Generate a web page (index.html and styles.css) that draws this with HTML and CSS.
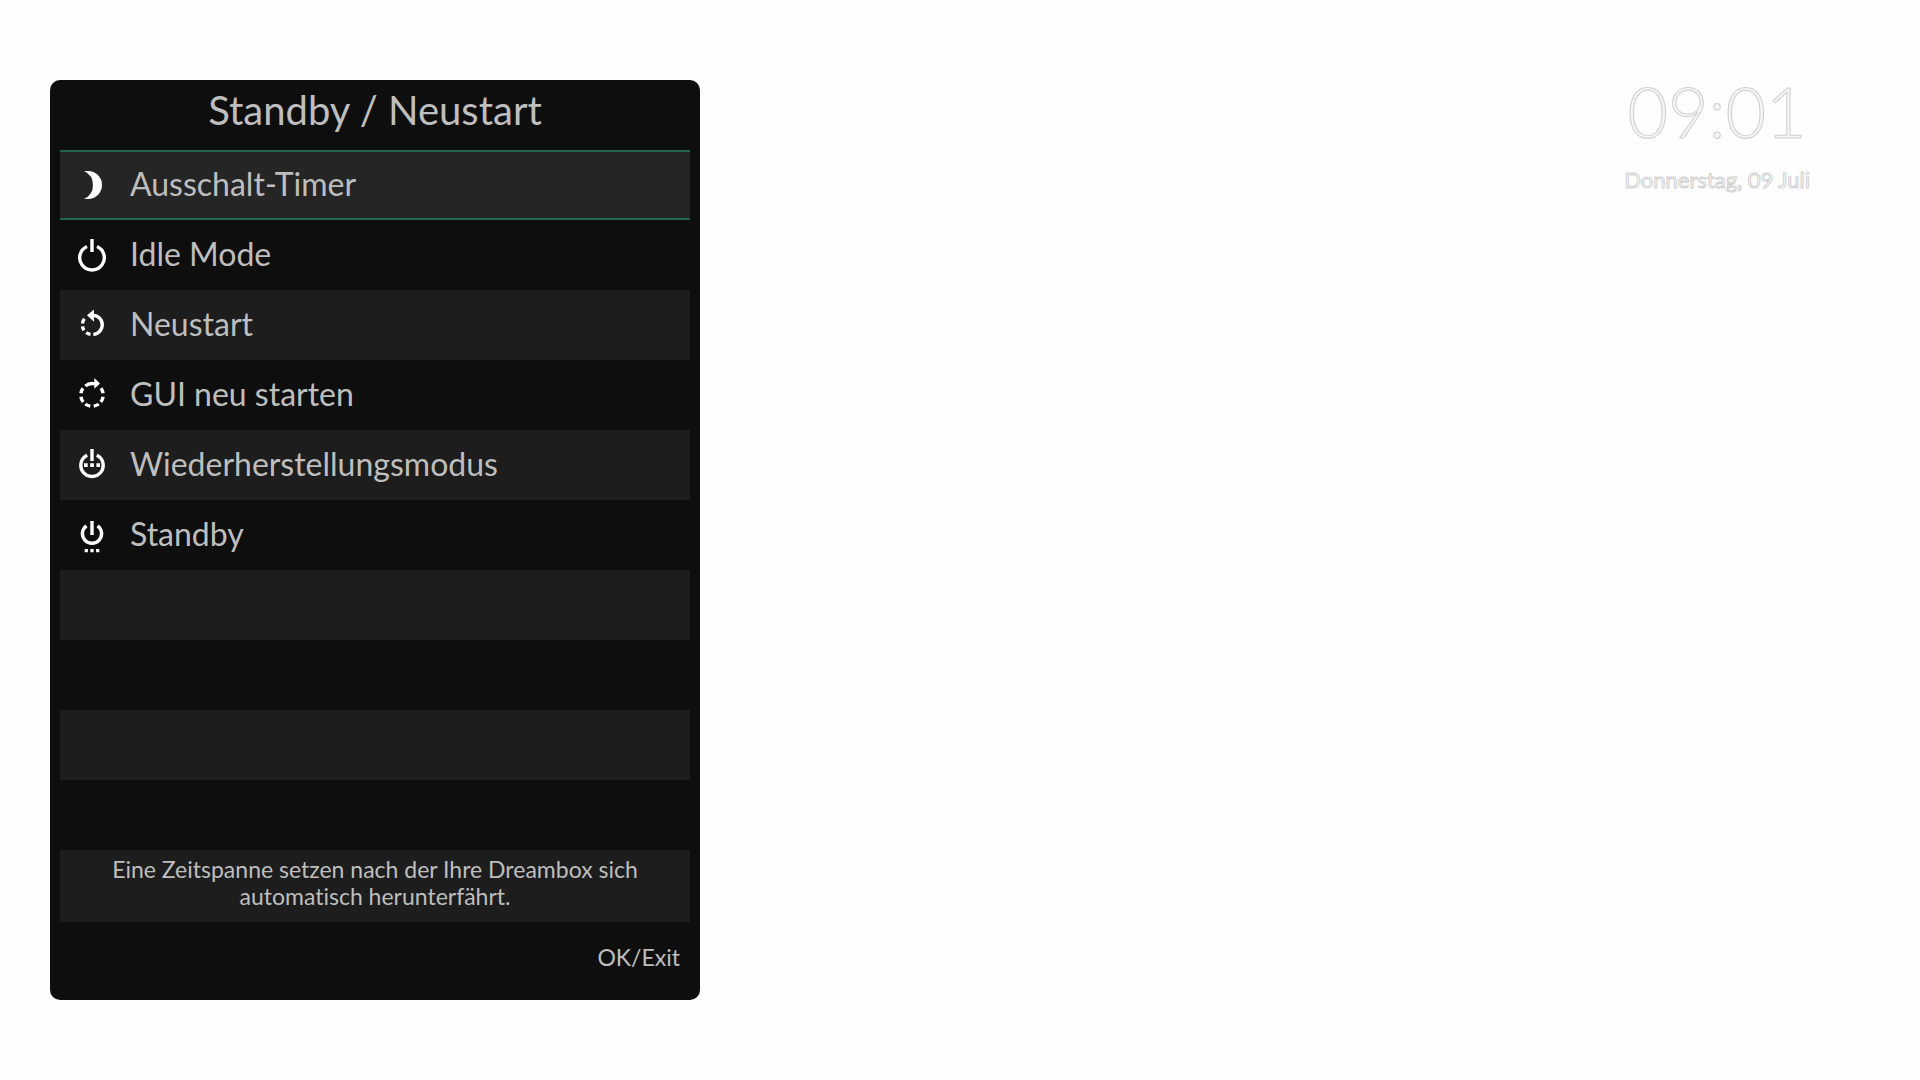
FILE: index.html
```
<!DOCTYPE html>
<html lang="de">
<head>
    <meta charset="UTF-8">
    <meta name="viewport" content="width=device-width, initial-scale=1.0">
    <title>Standby / Neustart</title>
    <link rel="stylesheet" href="styles.css">
</head>
<body>
    <main class="panel">
        <h1 class="title">Standby / Neustart</h1>
        <ul class="menu">
            <li class="row selected">
                <button class="item" type="button">
                    <svg class="icon" viewBox="0 0 40 40"><path class="solid" d="M12 6H16A14 14 0 0 1 16 34H12A15.4 15.4 0 0 0 12 6Z"/></svg>
                    <span class="label">Ausschalt-Timer</span>
                </button>
            </li>
            <li class="row">
                <button class="item" type="button">
                    <svg class="icon" viewBox="0 0 40 40"><path d="M25 11.5A12.3 12.3 0 1 1 15 11.5M20 4V17"/></svg>
                    <span class="label">Idle Mode</span>
                </button>
            </li>
            <li class="row">
                <button class="item" type="button">
                    <svg class="icon" viewBox="0 0 40 40">
                        <path d="M20 10.2A9.6 9.6 0 0 1 21.3 29.4M18.5 29.4A9.6 9.6 0 0 1 14.2 27.5M12 25.2A9.6 9.6 0 0 1 10.4 21.4M10.4 18.5A9.6 9.6 0 0 1 12.4 13.8"/>
                        <path class="solid" d="M15 10.3L22 4.5V16.7Z"/>
                    </svg>
                    <span class="label">Neustart</span>
                </button>
            </li>
            <li class="row">
                <button class="item" type="button">
                    <svg class="icon" viewBox="0 0 40 40">
                        <path d="M8.9 18.3A11.2 11.2 0 0 1 11 13.3M8.9 21.7A11.2 11.2 0 0 0 11.2 27M13.3 29A11.2 11.2 0 0 0 18.3 31.1M21.7 31.1A11.2 11.2 0 0 0 26.7 29M28.8 27A11.2 11.2 0 0 0 31.1 21.7M31.1 18.3A11.2 11.2 0 0 0 29 13.3M13.3 11A11.2 11.2 0 0 1 23 8.8"/>
                        <path class="solid" d="M28 8.4L22.3 3V13.8Z"/>
                    </svg>
                    <span class="label">GUI neu starten</span>
                </button>
            </li>
            <li class="row">
                <button class="item" type="button">
                    <svg class="icon" viewBox="0 0 40 40">
                        <path d="M24.8 10.2A11.2 11.2 0 1 1 15.2 10.2M20 4V16"/>
                        <path class="solid" d="M12 18.3h3.7v3.7h-3.7ZM18.2 18.3h3.7v3.7h-3.7ZM24.4 18.3h3.7v3.7h-3.7Z"/>
                    </svg>
                    <span class="label">Wiederherstellungsmodus</span>
                </button>
            </li>
            <li class="row">
                <button class="item" type="button">
                    <svg class="icon" viewBox="0 0 40 40">
                        <path d="M25.5 10.8A9.6 9.6 0 1 1 14.5 10.8M20 6V20"/>
                        <path class="solid" d="M12.7 34h3.2v3.2h-3.2ZM18.4 34h3.2v3.2h-3.2ZM24.1 34h3.2v3.2h-3.2Z"/>
                    </svg>
                    <span class="label">Standby</span>
                </button>
            </li>
            <li class="row"></li>
            <li class="row"></li>
            <li class="row"></li>
            <li class="row"></li>
        </ul>
        <p class="info">Eine Zeitspanne setzen nach der Ihre Dreambox sich automatisch herunterfährt.</p>
        <footer class="footer">
            <button class="exit-btn" type="button">OK/Exit</button>
        </footer>
    </main>

    <aside class="clock">
        <time class="time">09:01</time>
        <div class="date">Donnerstag, 09 Juli</div>
    </aside>
</body>
</html>
```
FILE: styles.css
```
* {
    box-sizing: border-box;
}
body {
    margin: 0;
    padding: 80px 110px 80px 50px;
    display: flex;
    justify-content: space-between;
    align-items: flex-start;
    background-color: #fefefe;
    color: #bebebe;
    font-family: "Lato", sans-serif;
    font-variant-ligatures: none;
}
button {
    background: none;
    border: none;
    padding: 0;
    color: inherit;
    font-family: inherit;
    cursor: pointer;
}
.panel {
    width: 34%;
    min-width: 650px;
    padding: 0 10px;
    background-color: #0e0e0e;
    border-radius: 10px;
}
.title {
    margin: 0;
    height: 70px;
    font-size: 40px;
    font-weight: normal;
    line-height: 60px;
    text-align: center;
}
.menu {
    list-style: none;
    margin: 0;
    padding: 0;
}
.row {
    height: 70px;
}
.row:nth-child(odd) {
    background-color: #1d1d1d;
}
.row.selected {
    background-color: #252525;
    border-top: 2px solid #20664d;
    border-bottom: 2px solid #20664d;
}
.item {
    display: flex;
    align-items: center;
    gap: 18px;
    width: 100%;
    height: 100%;
    padding: 0 12px;
    font-size: 32px;
    text-align: left;
}
.label {
    padding-bottom: 4px;
}
.icon {
    width: 40px;
    height: 40px;
    fill: none;
    stroke: #fff;
    stroke-width: 3.4;
}
.icon .solid {
    fill: #fff;
    stroke: none;
}
.info {
    margin: 0;
    padding: 6px 40px 12px;
    background-color: #1d1d1d;
    font-size: 23px;
    line-height: 27px;
    text-align: center;
}
.footer {
    display: flex;
    justify-content: flex-end;
    align-items: center;
    height: 78px;
    padding: 0 10px 8px;
}
.exit-btn {
    font-size: 23px;
}
/* clock in the top right corner */
.clock {
    text-align: center;
}
.time {
    display: block;
    color: #f5f5f5;
    font-size: 70px;
    font-weight: 300;
    line-height: 62px;
    -webkit-text-stroke: 1px #cfcfcf;
}
.date {
    margin-top: 22px;
    color: #fefefe;
    font-size: 22px;
    line-height: 32px;
    -webkit-text-stroke: 1px #cfcfcf;
}
```
